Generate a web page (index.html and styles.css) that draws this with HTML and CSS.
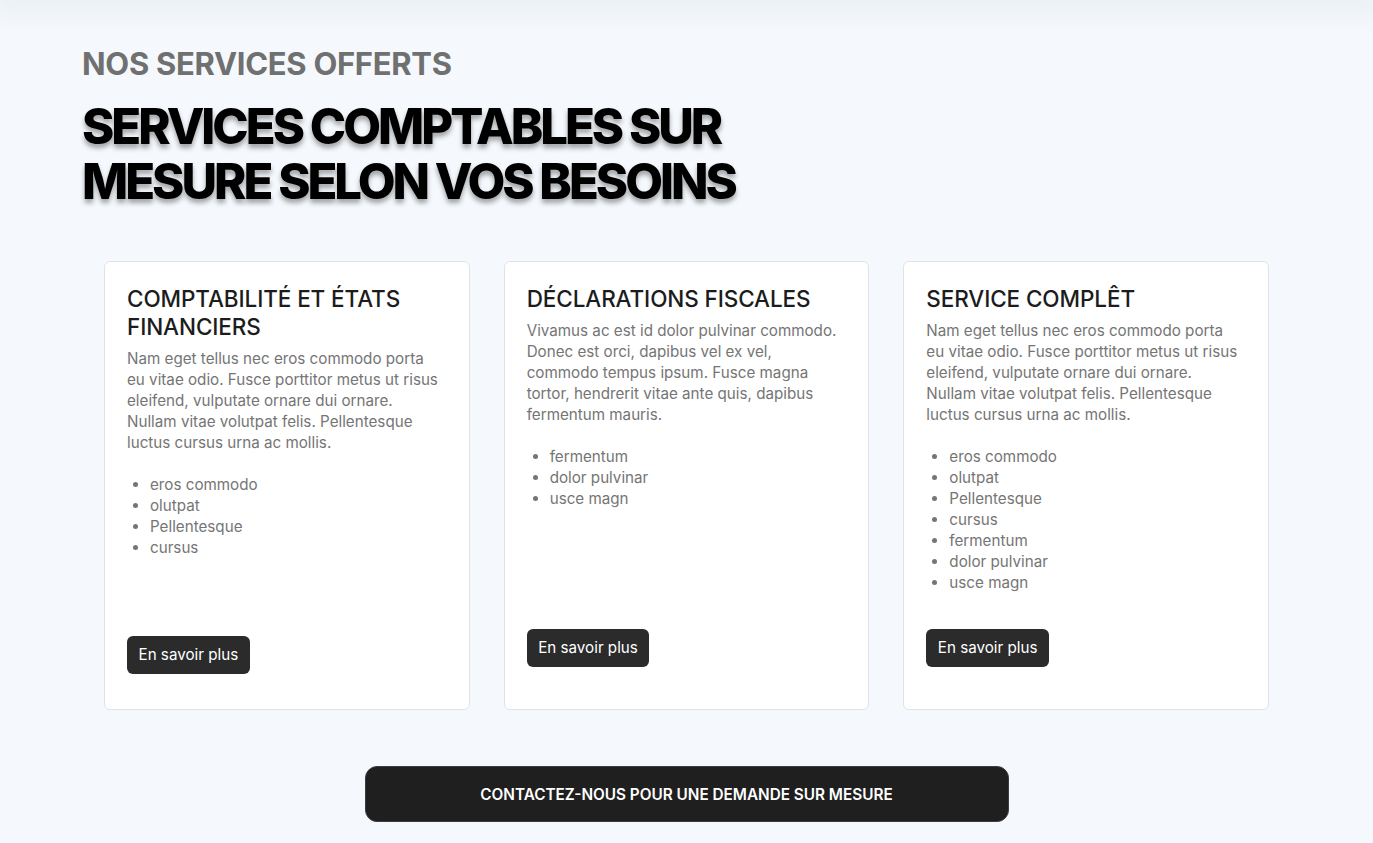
FILE: index.html
```
<!DOCTYPE html>
<html lang="fr">
<head>
<meta charset="utf-8">
<title>Nos services</title>
<link rel="stylesheet" href="styles.css">
</head>
<body>
<div class="topbar"></div>
<main class="services">
  <p class="services__eyebrow">NOS SERVICES OFFERTS</p>
  <h1 class="services__title">SERVICES COMPTABLES SUR<br>MESURE SELON VOS BESOINS</h1>

  <div class="cards">
    <article class="card">
      <h2 class="card__title">COMPTABILITÉ ET ÉTATS FINANCIERS</h2>
      <p class="card__text">Nam eget tellus nec eros commodo porta eu vitae odio. Fusce porttitor metus ut risus eleifend, vulputate ornare dui ornare. Nullam vitae volutpat felis. Pellentesque luctus cursus urna ac mollis.</p>
      <ul class="card__list">
        <li>eros commodo</li>
        <li>olutpat</li>
        <li>Pellentesque</li>
        <li>cursus</li>
      </ul>
      <a class="card__btn card__btn--low" href="#">En savoir plus</a>
    </article>
    <article class="card">
      <h2 class="card__title">DÉCLARATIONS FISCALES</h2>
      <p class="card__text">Vivamus ac est id dolor pulvinar commodo. Donec est orci, dapibus vel ex vel, commodo tempus ipsum. Fusce magna tortor, hendrerit vitae ante quis, dapibus fermentum mauris.</p>
      <ul class="card__list">
        <li>fermentum</li>
        <li>dolor pulvinar</li>
        <li>usce magn</li>
      </ul>
      <a class="card__btn" href="#">En savoir plus</a>
    </article>
    <article class="card">
      <h2 class="card__title">SERVICE COMPLÊT</h2>
      <p class="card__text">Nam eget tellus nec eros commodo porta eu vitae odio. Fusce porttitor metus ut risus eleifend, vulputate ornare dui ornare. Nullam vitae volutpat felis. Pellentesque luctus cursus urna ac mollis.</p>
      <ul class="card__list">
        <li>eros commodo</li>
        <li>olutpat</li>
        <li>Pellentesque</li>
        <li>cursus</li>
        <li>fermentum</li>
        <li>dolor pulvinar</li>
        <li>usce magn</li>
      </ul>
      <a class="card__btn" href="#">En savoir plus</a>
    </article>
  </div>

  <div class="cta-wrap">
    <a class="cta" href="#">CONTACTEZ-NOUS POUR UNE DEMANDE SUR MESURE</a>
  </div>
</main>
</body>
</html>
```

FILE: styles.css
```
* { box-sizing: border-box; }
html, body { margin: 0; padding: 0; }
body {
  background: #f5f9fd;
  font-family: Inter, "Noto Sans", sans-serif;
  color: #1e1e1e;
  overflow: hidden;
}
.topbar {
  height: 0;
  box-shadow: 0 0 28px 12px rgba(40, 50, 60, 0.06);
}
.services {
  padding: 45px 82px 0;
}
.services__eyebrow {
  margin: 0;
  font-size: 31px;
  line-height: 38px;
  font-weight: 700;
  color: #707070;
  letter-spacing: -0.3px;
}
.services__title {
  margin: 16px 0 0;
  font-size: 49px;
  line-height: 55px;
  font-weight: 800;
  letter-spacing: -3px;
  color: #000;
  text-shadow: 0 4px 5px rgba(0, 0, 0, 0.35);
}
.cards {
  display: grid;
  grid-template-columns: repeat(3, 1fr);
  gap: 34px;
  margin: 52px 22px 0;
}
.card {
  display: flex;
  flex-direction: column;
  align-items: flex-start;
  background: #fff;
  border: 1px solid #dfe3e8;
  border-radius: 6px;
  padding: 23px 24px 42px 22px;
}
.card__title {
  margin: 0 0 7px;
  font-size: 22.5px;
  line-height: 28px;
  font-weight: 500;
  color: #1c1c1c;
  letter-spacing: -0.1px;
}
.card__text {
  margin: 0 0 21px;
  font-size: 15.2px;
  line-height: 21px;
  color: #757575;
}
.card__list {
  margin: 0 0 36px;
  padding-left: 23px;
  font-size: 15.2px;
  line-height: 21px;
  color: #757575;
}
.card__btn {
  margin-top: auto;
  display: inline-block;
  background: #2b2b2b;
  color: #fff;
  text-decoration: none;
  font-size: 15.2px;
  line-height: 38px;
  height: 38px;
  padding: 0 11.5px;
  border-radius: 6px;
}
.card__btn--low {
  margin-bottom: -7px;
}
.cta-wrap {
  display: flex;
  justify-content: center;
  margin-top: 56px;
}
.cta {
  width: 644px;
  height: 56px;
  display: flex;
  align-items: center;
  justify-content: center;
  background: #1f1f1f;
  border: 1px solid #3a3d42;
  border-radius: 12px;
  color: #fff;
  text-decoration: none;
  font-size: 15.3px;
  font-weight: 600;
  letter-spacing: 0;
}
```
